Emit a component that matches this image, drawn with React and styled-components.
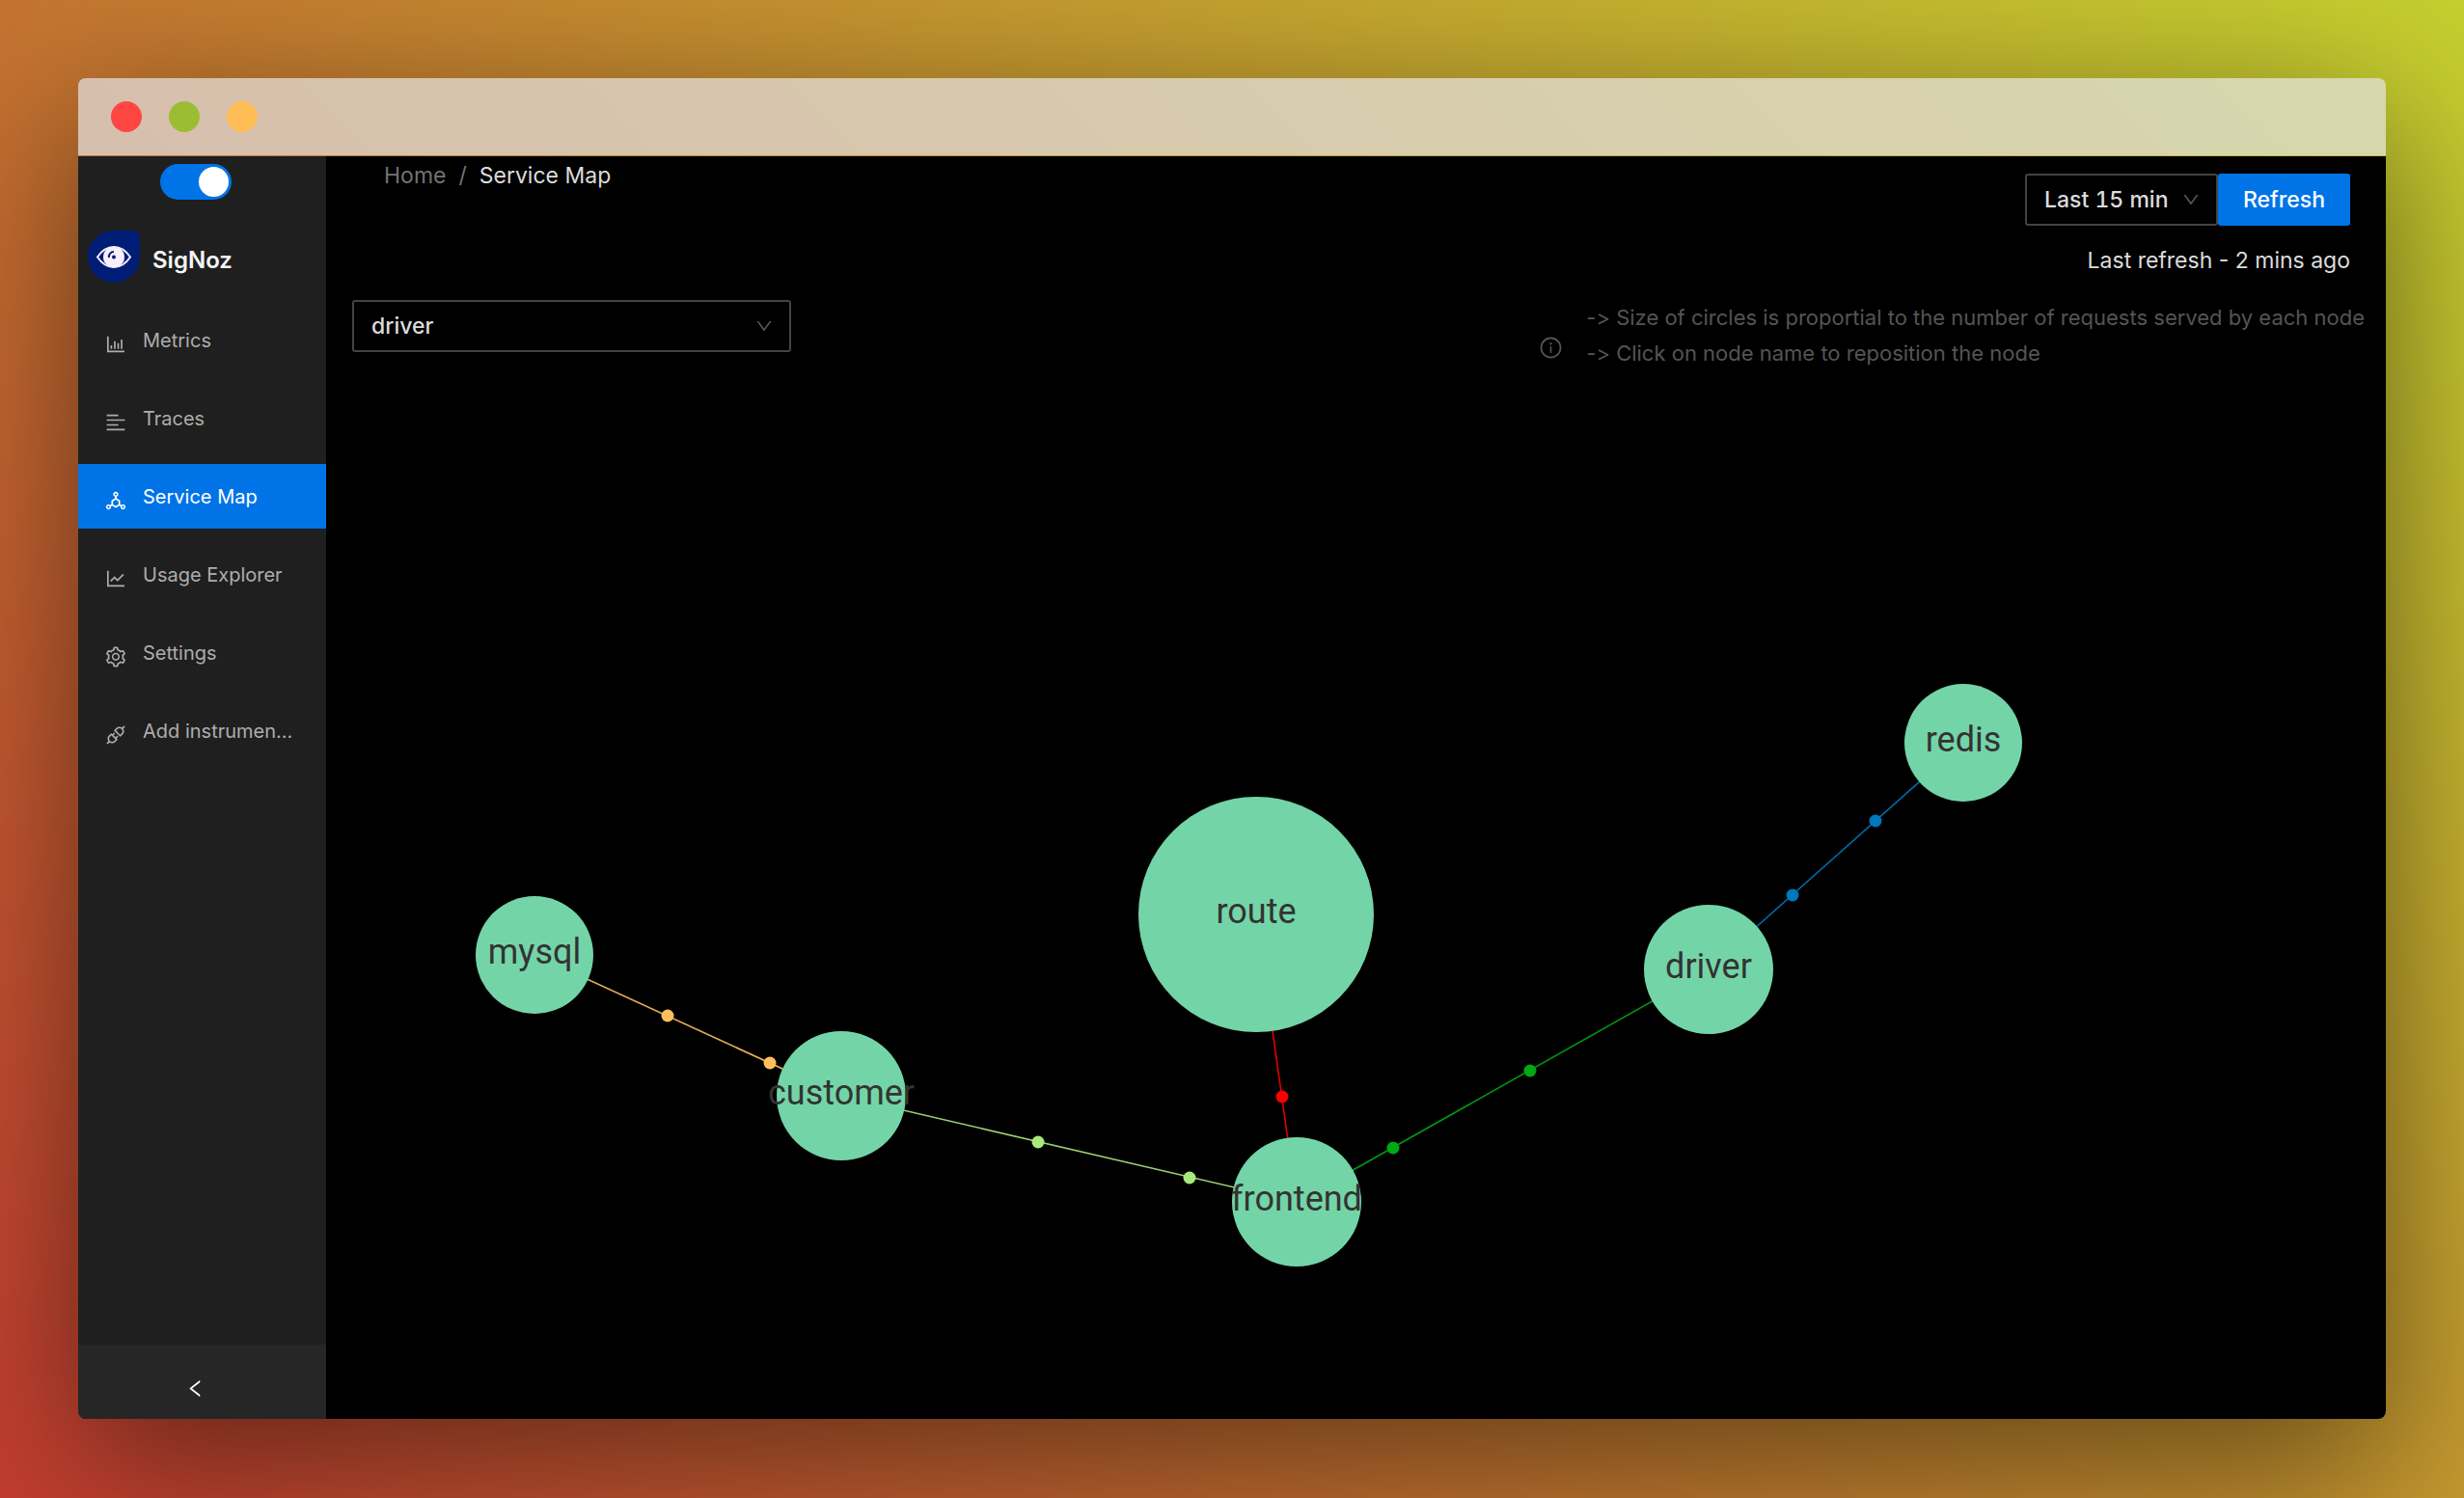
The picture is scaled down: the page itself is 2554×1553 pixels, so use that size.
import React, { useState } from "react";
import styled, { createGlobalStyle } from "styled-components";
import {
  AiOutlineAlignLeft,
  AiOutlineApi,
  AiOutlineBarChart,
  AiOutlineDeploymentUnit,
  AiOutlineDown,
  AiOutlineInfoCircle,
  AiOutlineLeft,
  AiOutlineLineChart,
  AiOutlineSetting,
} from "react-icons/ai";

const blue = "#0074e6";
const line = "#434343";
const textColor = "#dcdcdc";

const GlobalStyle = createGlobalStyle`
  *, *::before, *::after { box-sizing: border-box; }
  body {
    margin: 0;
    font-family: Inter, "Liberation Sans", sans-serif;
    font-size: 23px;
    line-height: 37px;
    color: ${textColor};
  }
  a { color: inherit; text-decoration: none; }
`;

const Backdrop = styled.div`
  display: flex;
  min-height: 100vh;
  padding: 81px 81px 82px;
  background: linear-gradient(45deg, #c43d31, #c5d02f);
`;

const Window = styled.div`
  flex: 1;
  min-width: 0;
  display: flex;
  flex-direction: column;
  gap: 1px;
  border-radius: 8px;
  overflow: hidden;
  box-shadow: 0 46px 160px rgba(0, 0, 0, 0.5);
`;

const TitleBar = styled.div`
  display: flex;
  align-items: center;
  gap: 28px;
  height: 80px;
  padding: 0 34px;
  background: rgba(222, 220, 222, 0.72);
`;

const Light = styled.span`
  width: 32px;
  height: 32px;
  border-radius: 50%;
  background: ${(p) => p.$color};
`;

const Body = styled.div`
  flex: 1;
  display: flex;
`;

const Sidebar = styled.aside`
  display: flex;
  flex-direction: column;
  flex: 0 0 257px;
  background: #1f1f1f;
`;

const ThemeSwitch = styled.input`
  appearance: none;
  display: flex;
  align-items: center;
  justify-content: flex-end;
  width: 74px;
  height: 37px;
  margin: 8px 0 0 85px;
  padding: 0 3px;
  border-radius: 19px;
  background: ${blue};

  &::before {
    content: "";
    width: 31px;
    height: 31px;
    border-radius: 50%;
    background: #fff;
  }

  &:not(:checked) {
    justify-content: flex-start;
    background: #555;
  }
`;

const Brand = styled.a`
  display: flex;
  align-items: flex-end;
  gap: 13px;
  margin-top: 32px;
  padding-left: 10px;
  font-size: 24px;
  font-weight: 600;
  line-height: 46px;
  color: #f5f5f5;
`;

const Nav = styled.nav`
  flex: 1;
  display: flex;
  flex-direction: column;
  gap: 14px;
  margin-top: 26px;
`;

const NavItem = styled.a`
  display: flex;
  align-items: center;
  gap: 16px;
  height: 67px;
  padding: 2px 27px 0;
  font-size: 20px;
  white-space: nowrap;
  color: ${(p) => (p.$active ? "#fff" : "#adadad")};
  background: ${(p) => (p.$active ? blue : "transparent")};

  svg {
    flex: none;
    width: 24px;
    height: 24px;
    margin-top: 6px;
  }
`;

const CollapseButton = styled.button`
  display: flex;
  align-items: center;
  justify-content: center;
  height: 77px;
  padding: 14px 14px 0 0;
  border: 0;
  background: #262626;
  color: #fff;
  font-size: 23px;
`;

const Main = styled.main`
  flex: 1;
  min-width: 0;
  display: flex;
  flex-direction: column;
  background: #000;
`;

const Header = styled.header`
  display: flex;
  justify-content: space-between;
  align-items: flex-start;
  padding: 0 37px 22px 60px;
`;

const Breadcrumb = styled.nav`
  display: flex;
  gap: 13px;
  padding-top: 2px;
  color: #737373;
`;

const Current = styled.span`
  color: ${textColor};
`;

const TimeControls = styled.div`
  display: flex;
  flex-direction: column;
  align-items: flex-end;
  gap: 18px;
  padding-top: 18px;
`;

const ButtonGroup = styled.div`
  display: flex;
`;

const SelectBox = styled.div`
  display: grid;
  align-items: center;
  width: ${(p) => p.$width}px;

  select,
  svg {
    grid-area: 1 / 1;
  }

  svg {
    justify-self: end;
    width: 20px;
    height: 20px;
    margin-right: 18px;
    color: #5a5a5a;
    pointer-events: none;
  }
`;

const Select = styled.select`
  appearance: none;
  width: 100%;
  height: 54px;
  padding: 0 18px;
  border: 2px solid ${line};
  border-radius: 3px;
  background: #000;
  color: ${textColor};
  font: inherit;
  font-weight: 500;
  font-variant-numeric: tabular-nums;
`;

const RefreshButton = styled.button`
  height: 54px;
  padding: 0 26px;
  border: 0;
  border-radius: 3px;
  background: ${blue};
  color: #fff;
  font: inherit;
  font-weight: 500;
`;

const LastRefresh = styled.div``;

const Toolbar = styled.div`
  display: flex;
  justify-content: space-between;
  align-items: flex-start;
  padding: 0 22px 0 27px;
`;

const Hint = styled.div`
  display: flex;
  align-items: center;
  gap: 24px;
  font-size: 22px;
  font-variant-ligatures: none;
  font-feature-settings: "calt" 0;
  color: #545454;

  svg {
    width: 25px;
    height: 25px;
    margin-top: 24px;
  }
`;

const HintLine = styled.div``;

const Graph = styled.svg`
  display: block;
  width: 100%;
  height: auto;
  margin-top: 14px;
  font-family: Roboto, sans-serif;
  font-size: 36px;
  text-anchor: middle;
`;

const navItems = [
  { label: "Metrics", Icon: AiOutlineBarChart },
  { label: "Traces", Icon: AiOutlineAlignLeft },
  { label: "Service Map", Icon: AiOutlineDeploymentUnit, active: true },
  { label: "Usage Explorer", Icon: AiOutlineLineChart },
  { label: "Settings", Icon: AiOutlineSetting },
  { label: "Add instrumen...", Icon: AiOutlineApi },
];

const nodes = {
  mysql: { x: 216, y: 591, r: 61 },
  customer: { x: 534, y: 737, r: 67 },
  route: { x: 964, y: 549, r: 122 },
  frontend: { x: 1006, y: 847, r: 67 },
  driver: { x: 1433, y: 606, r: 67 },
  redis: { x: 1697, y: 371, r: 61 },
};

const links = [
  { from: "customer", to: "mysql", color: "#ffc05c", dots: [[354, 654], [460, 703]] },
  { from: "frontend", to: "customer", color: "#a8e87c", dots: [[738, 785], [895, 822]] },
  { from: "frontend", to: "route", color: "#f80000", dots: [[991, 738]] },
  { from: "frontend", to: "driver", color: "#00a814", dots: [[1248, 711], [1106, 791]] },
  { from: "driver", to: "redis", color: "#0078be", dots: [[1520, 529], [1606, 452]] },
];

function Logo() {
  return (
    <svg width="54" height="54" viewBox="0 0 54 54" aria-hidden="true">
      <path d="M27 0H46Q54 0 54 8V27A27 27 0 0 1 0 27A27 27 0 0 1 27 0Z" fill="#001d76" />
      <path
        d="M10 27.500Q17 17 27 17T44 27.500Q37 38 27 38T10 27.500Z"
        fill="none"
        stroke="#efeaf6"
        strokeWidth="2"
      />
      <circle cx="27" cy="27.500" r="11" fill="#f7effa" />
      <path d="M22 28A5 5 0 0 1 27 22" fill="none" stroke="#001d76" strokeWidth="2" />
      <circle cx="27" cy="27.500" r="2" fill="#001d76" />
    </svg>
  );
}

function ServiceGraph() {
  return (
    <Graph viewBox="0 0 2135 1070" role="img" aria-label="Service map">
      {links.map(({ from, to, color, dots }) => (
        <g key={from + to} fill={color}>
          <line
            x1={nodes[from].x}
            y1={nodes[from].y}
            x2={nodes[to].x}
            y2={nodes[to].y}
            stroke={color}
            strokeWidth="1.600"
            strokeOpacity="0.900"
          />
          {dots.map(([x, y]) => (
            <circle key={x} cx={x} cy={y} r="6.500" />
          ))}
        </g>
      ))}
      {Object.entries(nodes).map(([name, { x, y, r }]) => (
        <g key={name}>
          <circle cx={x} cy={y} r={r} fill="#73d5a7" />
          <text x={x} y={y + 9} fill="#333">
            {name}
          </text>
        </g>
      ))}
    </Graph>
  );
}

export default function App() {
  const [dark, setDark] = useState(true);
  return (
    <>
      <GlobalStyle />
      <Backdrop>
        <Window>
          <TitleBar>
            <Light $color="#ff4643" />
            <Light $color="#9bbd34" />
            <Light $color="#ffbd55" />
          </TitleBar>
          <Body>
            <Sidebar>
              <ThemeSwitch
                type="checkbox"
                role="switch"
                aria-label="Dark theme"
                checked={dark}
                onChange={(e) => setDark(e.target.checked)}
              />
              <Brand href="#home">
                <Logo />
                SigNoz
              </Brand>
              <Nav aria-label="Main">
                {navItems.map(({ label, Icon, active }) => (
                  <NavItem key={label} href="#nav" $active={active}>
                    <Icon />
                    {label}
                  </NavItem>
                ))}
              </Nav>
              <CollapseButton aria-label="Collapse sidebar">
                <AiOutlineLeft />
              </CollapseButton>
            </Sidebar>
            <Main>
              <Header>
                <Breadcrumb aria-label="Breadcrumb">
                  <a href="#home">Home</a>
                  <span>/</span>
                  <Current>Service Map</Current>
                </Breadcrumb>
                <TimeControls>
                  <ButtonGroup>
                    <SelectBox $width={200}>
                      <Select aria-label="Time range" defaultValue="15">
                        <option value="15">Last 15 min</option>
                        <option value="30">Last 30 min</option>
                      </Select>
                      <AiOutlineDown />
                    </SelectBox>
                    <RefreshButton>Refresh</RefreshButton>
                  </ButtonGroup>
                  <LastRefresh>Last refresh - 2 mins ago</LastRefresh>
                </TimeControls>
              </Header>
              <Toolbar>
                <SelectBox $width={455}>
                  <Select aria-label="Service" defaultValue="driver">
                    {Object.keys(nodes).map((name) => (
                      <option key={name}>{name}</option>
                    ))}
                  </Select>
                  <AiOutlineDown />
                </SelectBox>
                <Hint>
                  <AiOutlineInfoCircle />
                  <div>
                    <HintLine>
                      {"-> Size of circles is proportial to the number of requests served by each node"}
                    </HintLine>
                    <HintLine>{"-> Click on node name to reposition the node"}</HintLine>
                  </div>
                </Hint>
              </Toolbar>
              <ServiceGraph />
            </Main>
          </Body>
        </Window>
      </Backdrop>
    </>
  );
}
